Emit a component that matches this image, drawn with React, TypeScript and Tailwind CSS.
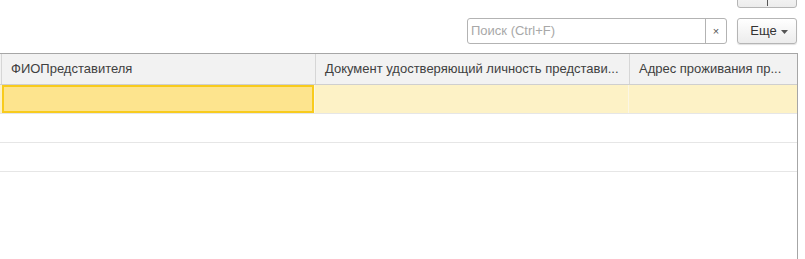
// Табличная часть 1С: панель поиска + таблица представителей.

const columns = [
  { title: "ФИОПредставителя", width: "w-[314px]" },
  { title: "Документ удостверяющий личность представи...", width: "w-[314px]" },
  { title: "Адрес проживания пр...", width: "flex-1" },
];

export default function App() {
  return (
    <div className="relative h-[259px] w-[805px] overflow-hidden bg-white font-['Liberation_Sans',Arial,sans-serif] text-[13px] text-[#404040]">
      {/* Обрезанная кнопка сверху */}
      <div className="flex justify-end pr-[8px]">
        <div className="-mt-[18px] flex h-[26px] w-[60px] items-end justify-center rounded-[3px] border border-[#b5b5b5] bg-gradient-to-b from-white to-[#ececec] pb-[1px]">
          <span className="block h-[6px] w-px bg-[#555]" />
        </div>
      </div>

      {/* Поиск + Еще */}
      <div className="mt-[10px] flex justify-end gap-[10px] pr-[8px]">
        <div className="flex h-[26px] w-[260px] rounded-[3px] border border-[#b3b3b3] bg-white">
          <div className="flex flex-1 items-center pl-[3px] text-[13px] text-[#a8a8a8]">
            Поиск (Ctrl+F)
          </div>
          <div className="flex w-[21px] items-center justify-center border-l border-[#b3b3b3] text-[11px] text-[#555]">
            ×
          </div>
        </div>
        <button className="flex h-[26px] w-[60px] items-center justify-center gap-[4px] rounded-[3px] border border-[#b5b5b5] bg-gradient-to-b from-white to-[#ececec] pl-[4px] text-[13px] text-[#333] shadow-[0_1px_1px_rgba(0,0,0,0.12)]">
          Еще
          <svg width="7" height="4" viewBox="0 0 7 4" className="mt-[2px]">
            <path d="M0 0h7L3.5 4z" fill="#555" />
          </svg>
        </button>
      </div>

      {/* Таблица */}
      <div className="mt-[9px] h-[300px] w-[798px] border-t border-r border-[#a6a6a6]">
        <div className="flex h-[31px] border-b border-[#cfcfcf] bg-[#f2f2f2]">
          {columns.map((c, i) => (
            <div
              key={i}
              className={`${c.width} flex items-center overflow-hidden whitespace-nowrap border-l border-[#d6d6d6] pl-[9px] ${i === 0 ? "ml-px" : ""}`}
            >
              {c.title}
            </div>
          ))}
        </div>

        {/* Строка 1 — текущая */}
        <div className="flex h-[29px] border-b border-[#e6e6e6] bg-[#fdf2c6]">
          <div className="ml-[2px] w-[312px] border-2 border-[#f8cb1d] bg-[#fde48e]" />
          <div className="w-[314px] border-l border-[#fbf6e4]" />
          <div className="flex-1 border-l border-[#fbf6e4]" />
        </div>
        <div className="h-[29px] border-b border-[#e6e6e6]" />
        <div className="h-[29px] border-b border-[#e6e6e6]" />
      </div>
    </div>
  );
}
